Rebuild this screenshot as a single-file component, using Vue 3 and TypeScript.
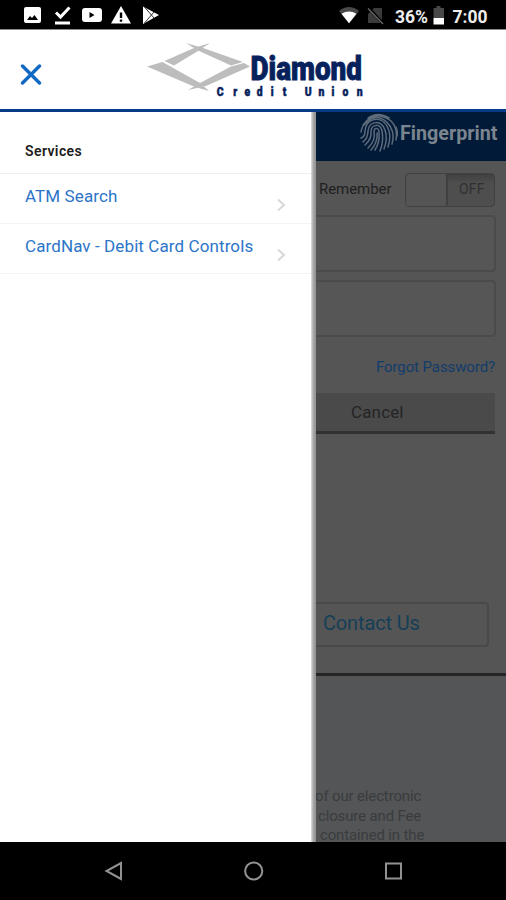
<script setup lang="ts">
interface Service {
  id: string
  label: string
}

const services: Service[] = [
  { id: 'atm', label: 'ATM Search' },
  { id: 'cardnav', label: 'CardNav - Debit Card Controls' },
]
</script>

<template>
  <div class="screen">
    <div class="status">
      <svg width="506" height="29" viewBox="0 0 506 29">
        <g fill="#fff">
          <path fill-rule="evenodd" d="M26 7h13q2 0 2 2v12q0 2-2 2h-13q-2 0-2-2v-12q0-2 2-2zM27 20h11l-3.500-5-2.500 3-2-2z" />
          <path d="M55 21.500h15v3h-15z" />
          <path d="M56 12.500l4.500 4.500 9-9.500" fill="none" stroke="#fff" stroke-width="3" />
          <path fill-rule="evenodd" d="M85 8h14q3 0 3 3v8q0 3-3 3h-14q-3 0-3-3v-8q0-3 3-3zM89.500 12v6l5-3z" />
          <path fill-rule="evenodd" d="M121 6l10 17.500h-20zM119.800 12.500v5.500h2.400v-5.500zM119.800 19.500v2.300h2.400v-2.300z" />
          <path d="M143 6.500l16 8.500-16 9z" />
          <path d="M144.500 7l9.500 11M144.500 23l9.500-11" stroke="#333" stroke-width="1" />
          <path d="M339 11q10-8 20 0l-10 12.500z" fill="#484848" />
          <path d="M341.500 13.800q7.500-4.500 15 0l-7.500 9.500z" />
        </g>
        <path d="M374 8h8v15h-14v-9z" fill="#3b3b3b" />
        <path d="M368.500 8l15 16" stroke="#000" stroke-width="3" />
        <path d="M368 8.500l15 15.500" stroke="#6a6a6a" stroke-width="1.300" />
        <path d="M433.500 8h3v-2h4v2h3.500v10h-10.500z" fill="#484848" />
        <path d="M433.500 18h10.500v6.500h-10.500z" fill="#fff" />
        <g class="status-text">
          <text x="395" y="22.500" textLength="33" lengthAdjust="spacingAndGlyphs">36%</text>
          <text x="452.500" y="22.500" textLength="35" lengthAdjust="spacingAndGlyphs">7:00</text>
        </g>
      </svg>
    </div>

    <header class="brand">
      <button class="close" aria-label="Close">
        <svg width="22" height="22" viewBox="0 0 22 22">
          <path d="M2.500 2l17 17M19.500 2l-17 17" stroke="#1269c4" stroke-width="3.400" stroke-linecap="round" />
        </svg>
      </button>
      <svg class="logo" width="220" height="64" viewBox="145 38 220 64">
        <g fill="#bdbdbd">
          <path d="M147 66.500L162.500 62 200 83 209 91 195 87z" />
          <path d="M164.500 61L194 48 210 43 198 51 174 65.500z" />
          <path d="M186 43L203 48 243 62 231 65.500 198 50.500z" />
          <path d="M250 66.500L244 63 231 66.500 200 83 188 90 206 86z" />
        </g>
        <text class="logo-name" x="250.500" y="80" textLength="111.500" lengthAdjust="spacingAndGlyphs">Diamond</text>
        <g transform="scale(.8 1)" class="logo-sub">
          <text y="96" x="271 291.500 305.500 321 338.500 353.500 364 381 398 414.500 428 446">Credit Union</text>
        </g>
      </svg>
    </header>

    <main class="content">
      <aside class="drawer">
        <h2 class="heading"><span>Services</span></h2>
        <a v-for="service in services" :key="service.id" class="service">
          <span class="label">{{ service.label }}</span>
          <svg class="chevron" width="10" height="14" viewBox="0 0 10 14">
            <path d="M2 1.500l6 5.500-6 5.500" fill="none" stroke="#d8d8d8" stroke-width="2" />
          </svg>
        </a>
      </aside>

      <section class="page">
        <div class="banner">
          <svg class="finger" width="38" height="39" viewBox="0 0 38 39">
            <g fill="none" stroke="#5d6b7a" stroke-width="1.500" stroke-linecap="round">
              <path d="M8 5Q18-2 29 5M3 12Q15-4 31 8 38 15 36 27M1 19Q2 13 5 11 18-3 30 13 35 21 32 31" />
              <path d="M1 25Q5 24 5 18C6 5 21 2 27 13Q32 22 28 34" />
              <path d="M3 29Q8 25 8 18C9 8 21 6 25 17Q28 26 24 36" />
              <path d="M5 32Q12 26 11 18C12 11 20 10 22 18Q24 28 20 38" />
              <path d="M8 35Q16 27 14 19C14 14 19 14 19 20Q20 29 15 37" />
              <path d="M17 20Q18 29 11 37M36 14Q38 19 37 23" />
            </g>
          </svg>
          <span class="banner-text">Fingerprint</span>
        </div>
        <div class="remember">
          <span class="remember-text">Remember</span>
          <div class="toggle"><i class="knob"></i><span>OFF</span></div>
        </div>
        <div class="field"></div>
        <div class="field second"></div>
        <a class="forgot">Forgot Password?</a>
        <div class="cancel">Cancel</div>
        <div class="contact">Contact Us</div>
        <footer class="legal">
          <p class="l1">of our electronic</p>
          <p class="l2">closure and Fee</p>
          <p class="l3">contained in the</p>
        </footer>
      </section>
    </main>

    <nav class="nav">
      <svg width="506" height="58" viewBox="0 842 506 58">
        <g fill="none" stroke="#929292" stroke-width="2">
          <path d="M121 863v16l-14.500-8z" />
          <circle cx="253.700" cy="871" r="8.600" />
          <path d="M386 863.500h15v15h-15z" />
        </g>
      </svg>
    </nav>
  </div>
</template>

<style>
body {
  margin: 0;
  overflow: hidden;
}
</style>

<style scoped>
.screen {
  width: 506px;
  height: 900px;
  display: flex;
  flex-direction: column;
  overflow: hidden;
  background: #000;
  font-family: Roboto, "Liberation Sans", sans-serif;
}
svg {
  display: block;
  flex: none;
}
.status {
  height: 29px;
  background: #000;
}
.status-text {
  fill: #eee;
  font-size: 18px;
  font-weight: 700;
}
.brand {
  box-sizing: border-box;
  height: 83px;
  display: flex;
  align-items: flex-start;
  background: #fff;
  border-top: 1px solid #8a8a8a;
  border-bottom: 3px solid #093c88;
}
.close {
  margin: 34px 0 0 20px;
  padding: 0;
  border: 0;
  background: none;
}
.logo {
  margin: 8px 0 0 103px;
  overflow: visible;
}
.logo-name {
  fill: #06215c;
  stroke: #06215c;
  stroke-width: 0.9px;
  font-size: 34px;
  font-weight: 900;
}
.logo-sub {
  fill: #06215c;
  stroke: #06215c;
  stroke-width: 0.5px;
  font-size: 13px;
  font-weight: 900;
}
.content {
  height: 730px;
  display: flex;
}
.drawer {
  box-sizing: border-box;
  width: 316px;
  flex: none;
  background: #fff;
  border-right: 5px solid #9b9b9b;
  border-image: linear-gradient(90deg, #e2e2e2 98.400%, #a5a5a5 99.200%, #929292) 0 5 0 0;
}
.heading {
  box-sizing: border-box;
  height: 62px;
  margin: 0;
  padding: 29px 0 0 25px;
  border-bottom: 1px solid #efefef;
  color: #1c1c1c;
  font-size: 14px;
  line-height: 20px;
  font-weight: 600;
  letter-spacing: 0.4px;
}
.service {
  box-sizing: border-box;
  height: 50px;
  display: flex;
  justify-content: space-between;
  padding: 11px 25px 0 25px;
  border-bottom: 1px solid #f3f3f3;
}
.label {
  color: #2c74c8;
  font-size: 17px;
  line-height: 22px;
  letter-spacing: 0.1px;
  white-space: nowrap;
}
.chevron {
  margin-top: 13px;
}
.page {
  width: 190px;
  height: 730px;
  overflow: hidden;
  display: flex;
  flex-direction: column;
  background: #555;
}
.banner {
  height: 49px;
  flex: none;
  display: flex;
  background: #001a38;
}
.finger {
  margin: 1px 0 0 44px;
}
.banner-text {
  margin-left: 2px;
  color: #7b858f;
  font-size: 19.700px;
  font-weight: 700;
  line-height: 43px;
}
.remember {
  height: 54px;
  flex: none;
  display: flex;
}
.remember-text {
  width: 86px;
  padding-left: 3px;
  color: #1f1f1f;
  font-size: 15px;
  line-height: 56px;
  letter-spacing: -0.05px;
}
.toggle {
  box-sizing: border-box;
  width: 90px;
  height: 34px;
  margin-top: 12px;
  display: flex;
  border: 1.500px solid #404040;
  border-radius: 4px;
  background: linear-gradient(#404040, #4e4e4e 30%);
  color: #303030;
  font-size: 14px;
  line-height: 30px;
  letter-spacing: 0.2px;
}
.knob {
  width: 40px;
  border-right: 2px solid #404040;
  border-radius: 3px;
  background: #555;
}
.toggle span {
  margin-left: 11px;
}
.field {
  box-sizing: border-box;
  width: 180px;
  height: 57px;
  flex: none;
  border: 2px solid #4b4b4b;
  border-left: 0;
  border-radius: 0 4px 4px 0;
  background: #565656;
}
.second {
  margin-top: 8px;
}
.forgot {
  height: 56px;
  flex: none;
  padding-right: 11px;
  color: #123c6b;
  font-size: 15px;
  line-height: 61px;
  letter-spacing: -0.1px;
  text-align: right;
}
.cancel {
  box-sizing: border-box;
  width: 179px;
  height: 41px;
  flex: none;
  padding-left: 35px;
  border-bottom: 3px solid #323232;
  background: #4a4a4a;
  color: #242424;
  font-size: 17px;
  line-height: 39px;
  letter-spacing: 0.15px;
}
.contact {
  box-sizing: border-box;
  width: 173px;
  height: 45px;
  flex: none;
  margin-top: 168px;
  padding-left: 7px;
  border: 2px solid #494949;
  border-left: 0;
  border-radius: 0 4px 4px 0;
  color: #153f57;
  font-size: 20px;
  line-height: 38px;
  letter-spacing: -0.15px;
}
.legal {
  flex: 1;
  margin-top: 26px;
  padding-top: 111px;
  border-top: 3px solid #262626;
  background: #535557;
  color: #3a3c3e;
  font-size: 15px;
  line-height: 19.500px;
  letter-spacing: -0.15px;
}
.legal p {
  margin: 0;
  white-space: nowrap;
}
.l1 {
  text-indent: -1px;
}
.l2 {
  text-indent: 2px;
}
.l3 {
  text-indent: 4px;
}
.nav {
  height: 58px;
  background: #000;
}
</style>
